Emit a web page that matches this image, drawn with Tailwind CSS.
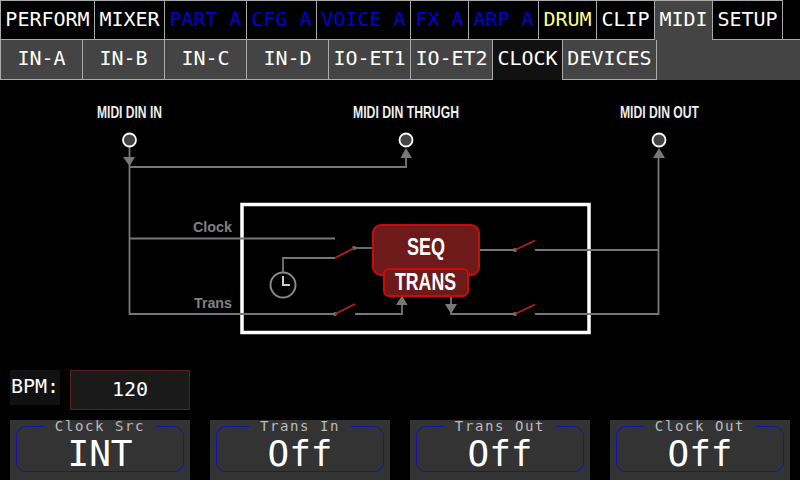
<!DOCTYPE html>
<html lang="en">
    <head>
        <meta charset="UTF-8">
        <title>MIDI Clock</title>
        <script src="https://cdn.jsdelivr.net/npm/@tailwindcss/browser@4"></script>
    </head>
    <body class="w-[800px] h-[480px] overflow-hidden bg-black text-white font-['DejaVu_Sans_Mono',monospace]">
        <!-- Top tabs -->
        <nav class="flex h-[40px] text-[20px] leading-[37px] text-center">
            <div class="w-[95px] border border-[#aaa]">PERFORM</div>
            <div class="w-[70px] border-y border-r border-[#aaa]">MIXER</div>
            <div class="w-[82px] border-y border-r border-[#aaa] text-[#0000d8] whitespace-pre">PART A</div>
            <div class="w-[70px] border-y border-r border-[#aaa] text-[#0000d8] whitespace-pre">CFG A</div>
            <div class="w-[94px] border-y border-r border-[#aaa] text-[#0000d8] whitespace-pre">VOICE A</div>
            <div class="w-[58px] border-y border-r border-[#aaa] text-[#0000d8] whitespace-pre">FX A</div>
            <div class="w-[70px] border-y border-r border-[#aaa] text-[#0000d8] whitespace-pre">ARP A</div>
            <div class="w-[58px] border-y border-r border-[#aaa] text-[#ffff80]">DRUM</div>
            <div class="w-[58px] border-y border-r border-[#aaa]">CLIP</div>
            <div class="w-[58px] border-t border-r border-[#aaa] bg-[#444]">MIDI</div>
            <div class="w-[70px] border-y border-r border-[#aaa]">SETUP</div>
            <div class="flex-1 border-b border-[#aaa]"></div>
        </nav>

        <!-- Sub tabs -->
        <nav class="flex h-[40px] text-[20px] leading-[37px] text-center bg-[#444]">
            <div class="w-[83px] border-l border-r border-b border-[#aaa]">IN-A</div>
            <div class="w-[82px] border-r border-b border-[#aaa]">IN-B</div>
            <div class="w-[82px] border-r border-b border-[#aaa]">IN-C</div>
            <div class="w-[82px] border-r border-b border-[#aaa]">IN-D</div>
            <div class="w-[82px] border-r border-b border-[#aaa]">IO-ET1</div>
            <div class="w-[82px] border-r border-b border-[#aaa]">IO-ET2</div>
            <div class="w-[70px] border-r border-[#aaa] bg-[#111]">CLOCK</div>
            <div class="w-[94px] border-r border-b border-[#aaa]">DEVICES</div>
        </nav>

        <!-- Signal diagram -->
        <svg class="block" width="800" height="290" viewBox="0 80 800 290" xmlns="http://www.w3.org/2000/svg">
            <rect x="242" y="204.500" width="347" height="128" fill="none" stroke="#fff" stroke-width="3.500"/>

            <g fill="none" stroke="#777" stroke-width="1.800">
                <path d="M129.500 146V314H335"/>
                <path d="M129.500 167H406V156"/>
                <path d="M129.500 238.500H335"/>
                <path d="M335 258H283V273"/>
                <path d="M354 248H373"/>
                <path d="M355 314H402V303"/>
                <path d="M478 250H515M535 250H658.500"/>
                <path d="M451 296V314H515M535 314H658.500V156"/>
                <circle cx="283" cy="285" r="12.500" stroke="#888" stroke-width="2"/>
            </g>
            <path d="M283 276V285H290" fill="none" stroke="#ccc" stroke-width="2"/>

            <g fill="#777">
                <path d="M123 157H135L129.500 166Z"/>
                <path d="M400.500 158H412L406 148Z"/>
                <path d="M653 158H665L659 148Z"/>
                <path d="M396 305H407.500L402 295.500Z"/>
                <path d="M445 304H457L451 314Z"/>
                <circle cx="335" cy="314" r="2"/>
                <circle cx="354" cy="248" r="2"/>
                <circle cx="515" cy="250" r="2"/>
                <circle cx="515" cy="314" r="2"/>
            </g>

            <g fill="none" stroke="#b81c1c" stroke-width="1.800">
                <path d="M335 258L354 248"/>
                <path d="M335 314L355 304"/>
                <path d="M515 250L535 240.500"/>
                <path d="M515 314L535 304.500"/>
            </g>

            <g fill="#444" stroke="#fff" stroke-width="1.800">
                <circle cx="129.500" cy="140" r="6.500"/>
                <circle cx="406" cy="140" r="6.500"/>
                <circle cx="659" cy="140" r="6.500"/>
            </g>

            <rect x="373" y="225" width="106" height="50" rx="8" fill="#6e1a1a" stroke="#c80c0c" stroke-width="2"/>
            <rect x="384" y="269" width="84" height="27" rx="5" fill="#6e1a1a" stroke="#c80c0c" stroke-width="2"/>

            <g font-family="'Liberation Sans',sans-serif" font-weight="700">
                <text x="97" y="118" font-size="17" fill="#eee" textLength="65" lengthAdjust="spacingAndGlyphs">MIDI DIN IN</text>
                <text x="353" y="118" font-size="17" fill="#eee" textLength="106" lengthAdjust="spacingAndGlyphs">MIDI DIN THRUGH</text>
                <text x="620" y="118" font-size="17" fill="#eee" textLength="79" lengthAdjust="spacingAndGlyphs">MIDI DIN OUT</text>
                <text x="193" y="232" font-size="14" fill="#808080" textLength="39" lengthAdjust="spacingAndGlyphs">Clock</text>
                <text x="194" y="308" font-size="14" fill="#808080" textLength="38" lengthAdjust="spacingAndGlyphs">Trans</text>
                <text x="407" y="255" font-size="23" fill="#fff" textLength="38" lengthAdjust="spacingAndGlyphs">SEQ</text>
                <text x="395" y="290" font-size="23" fill="#fff" textLength="61" lengthAdjust="spacingAndGlyphs">TRANS</text>
            </g>
        </svg>

        <!-- BPM -->
        <div class="flex gap-[10px] px-[10px] h-[40px] items-start">
            <div class="w-[50px] h-[35px] bg-[#111] text-[20px] leading-[32px] text-center">BPM:</div>
            <div class="w-[120px] h-[40px] bg-[#1a1a1a] border border-[#5c2020] text-[20px] leading-[36px] text-center">120</div>
        </div>

        <!-- Encoders -->
        <div class="flex gap-[20px] px-[10px] mt-[10px] h-[60px]">
            <div class="w-[180px] h-[60px] bg-[#333] px-[6px]">
                <fieldset class="h-[53px] mt-[-1px] border border-[#1414a8] rounded-[10px] text-center">
                    <legend class="mx-auto px-[10px] text-[14px] leading-[14px] tracking-[1.6px] text-[#bbb]">Clock Src</legend>
                    <div class="text-[36px] leading-[36px] mt-[3px]">INT</div>
                </fieldset>
            </div>
            <div class="w-[180px] h-[60px] bg-[#333] px-[6px]">
                <fieldset class="h-[53px] mt-[-1px] border border-[#1414a8] rounded-[10px] text-center">
                    <legend class="mx-auto px-[10px] text-[14px] leading-[14px] tracking-[1.6px] text-[#bbb]">Trans In</legend>
                    <div class="text-[36px] leading-[36px] mt-[3px]">Off</div>
                </fieldset>
            </div>
            <div class="w-[180px] h-[60px] bg-[#333] px-[6px]">
                <fieldset class="h-[53px] mt-[-1px] border border-[#1414a8] rounded-[10px] text-center">
                    <legend class="mx-auto px-[10px] text-[14px] leading-[14px] tracking-[1.6px] text-[#bbb]">Trans Out</legend>
                    <div class="text-[36px] leading-[36px] mt-[3px]">Off</div>
                </fieldset>
            </div>
            <div class="w-[180px] h-[60px] bg-[#333] px-[6px]">
                <fieldset class="h-[53px] mt-[-1px] border border-[#1414a8] rounded-[10px] text-center">
                    <legend class="mx-auto px-[10px] text-[14px] leading-[14px] tracking-[1.6px] text-[#bbb]">Clock Out</legend>
                    <div class="text-[36px] leading-[36px] mt-[3px]">Off</div>
                </fieldset>
            </div>
        </div>
    </body>
</html>
